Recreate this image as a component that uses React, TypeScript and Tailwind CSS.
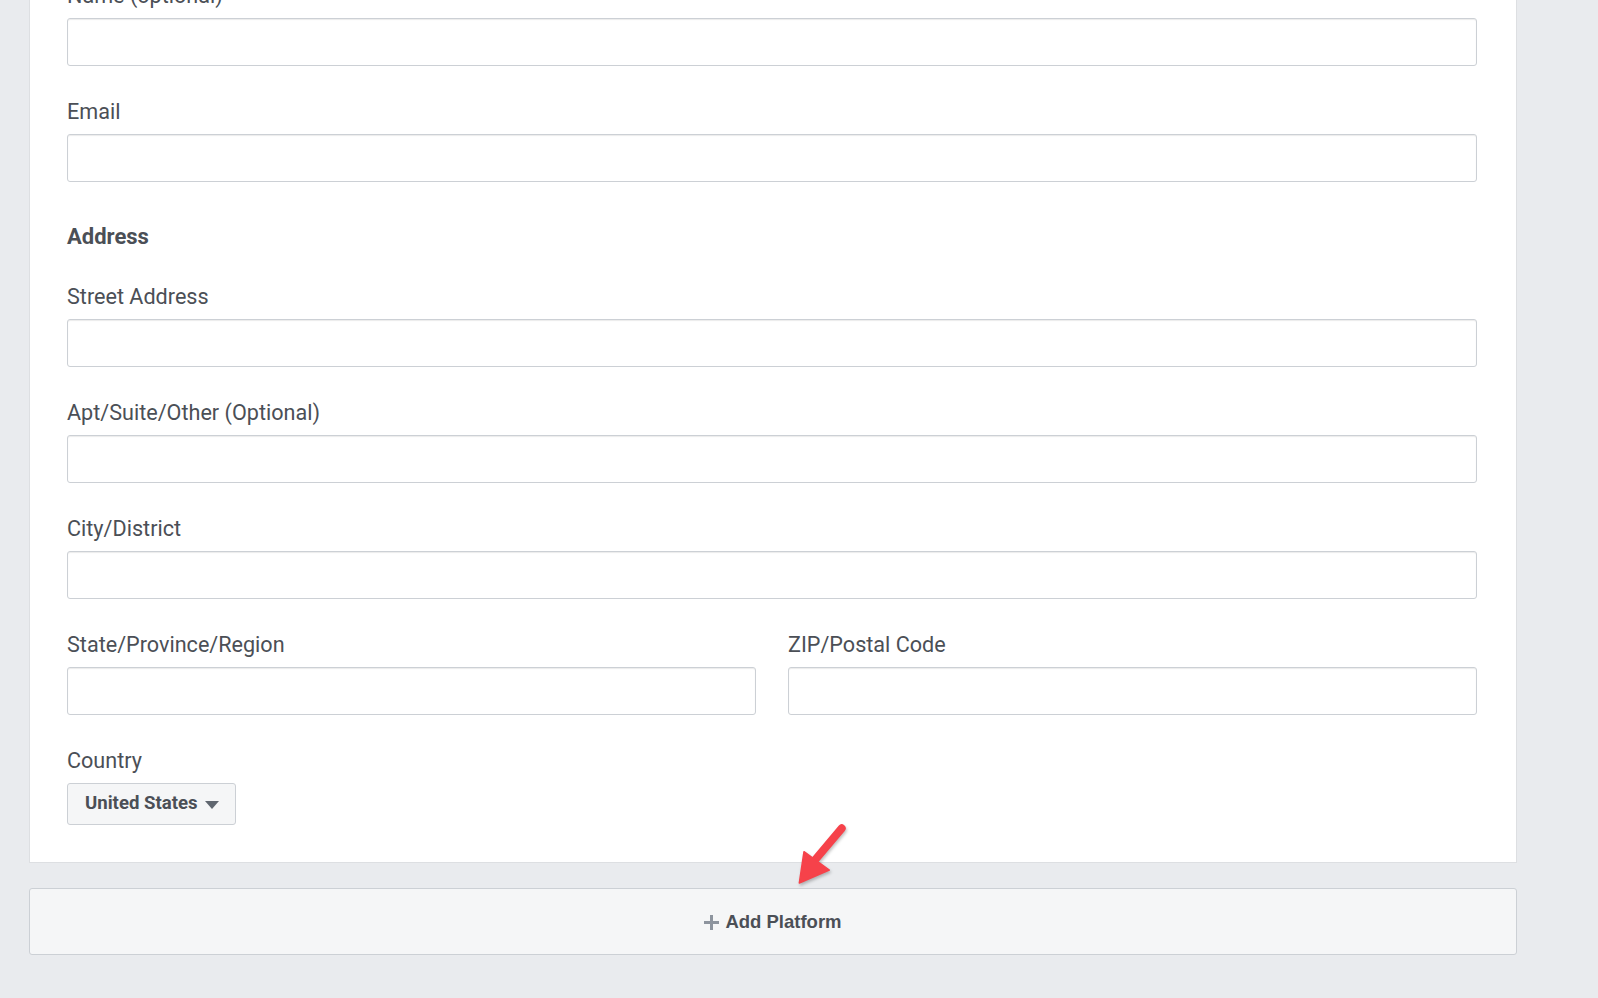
import React from 'react';

const labelCls = 'block text-[21.6px] leading-[28px] text-[#4b4f56] mb-2';
const inputCls =
  'block w-full h-12 rounded-[3px] border border-[#ccd0d5] bg-white px-3 text-[18px] text-[#1d2129] shadow-[inset_0_1px_1px_rgba(0,0,0,0.08)] outline-none';

function Field({ label, className = '' }: { label: string; className?: string }) {
  return (
    <div className={className}>
      <label className={labelCls}>{label}</label>
      <input type="text" className={inputCls} />
    </div>
  );
}

export default function App() {
  return (
    <div
      className="relative h-[998px] w-full overflow-hidden bg-[#e9ebee]"
      style={{ fontFamily: 'Roboto, "Liberation Sans", Arial, sans-serif' }}
    >
      <div className="ml-[29px] w-[1488px] -mt-[56px]">
        {/* form card */}
        <div className="border border-[#dddfe2] bg-white pl-[37px] pr-[39px] pt-[37px] pb-[37px]">
          <Field label="Name (optional)" />
          <Field label="Email" className="mt-8" />

          <h3 className="mt-[41px] text-[22px] leading-[28px] font-bold text-[#4b4f56]">Address</h3>

          <Field label="Street Address" className="mt-8" />
          <Field label="Apt/Suite/Other (Optional)" className="mt-8" />
          <Field label="City/District" className="mt-8" />

          <div className="mt-8 grid grid-cols-2 gap-8">
            <Field label="State/Province/Region" />
            <Field label="ZIP/Postal Code" />
          </div>

          <div className="mt-8">
            <label className={labelCls}>Country</label>
            <button
              type="button"
              className="flex h-[42px] w-fit items-center gap-[7px] whitespace-nowrap rounded-[3px] border border-[#ccd0d5] bg-[#f5f6f7] pl-[17px] pr-[16px] text-[18.6px] font-bold text-[#4b4f56]"
            >
              <span>United States</span>
              <svg width="14" height="8" viewBox="0 0 14 8" className="mt-[1px]">
                <path d="M0 0h14L7 8z" fill="#606770" />
              </svg>
            </button>
          </div>
        </div>

        {/* add platform */}
        <div className="mt-[25px] flex h-[67px] items-center justify-center rounded-[3px] border border-[#ccd0d5] bg-[#f5f6f7]">
          <span
            className="flex items-center gap-[6px] whitespace-nowrap text-[18.5px] font-bold text-[#4b4f56]"
            style={{ fontFamily: '"Liberation Sans", Arial, sans-serif' }}
          >
            <svg width="15" height="15" viewBox="0 0 15 15" className="mt-[2px]">
              <path d="M6 0h3v6h6v3H9v6H6V9H0V6h6z" fill="#8d949e" />
            </svg>
            Add Platform
          </span>
        </div>
      </div>

      {/* red annotation arrow */}
      <svg
        className="absolute left-[790px] top-[820px]"
        width="60"
        height="70"
        viewBox="0 0 60 70"
        style={{ filter: 'drop-shadow(1px 2px 1.5px rgba(0,0,0,0.25))' }}
      >
        <path d="M51.7 8.3L25 40" stroke="#f6424a" strokeWidth="8" strokeLinecap="round" fill="none" />
        <path d="M9.3 63L14 31.7L39.3 50Z" fill="#f6424a" stroke="#f6424a" strokeWidth="1.5" strokeLinejoin="round" />
      </svg>
    </div>
  );
}
